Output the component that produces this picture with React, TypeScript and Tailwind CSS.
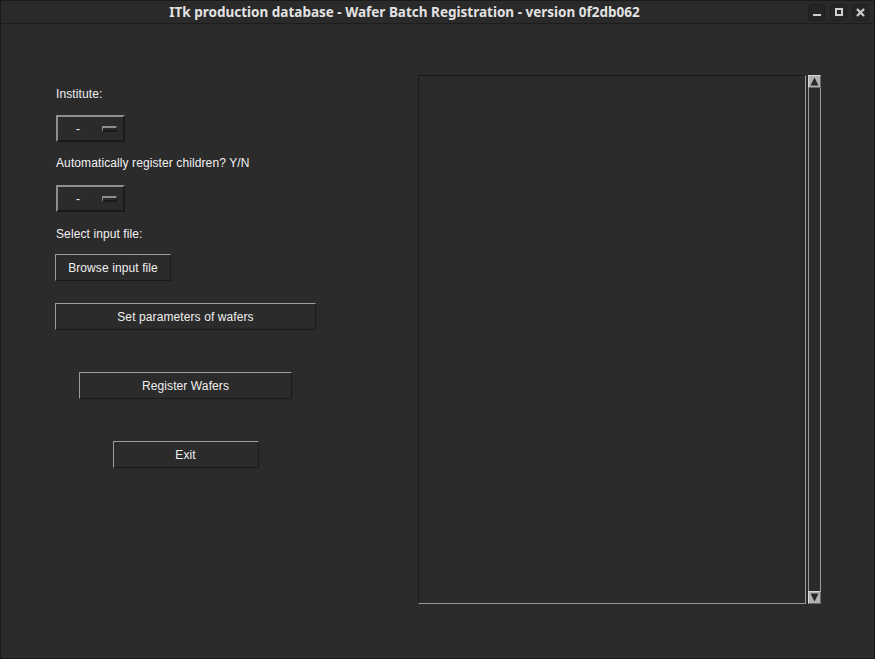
import React from "react";

const font = { fontFamily: '"Liberation Sans", Arial, sans-serif' };

const TkButton = ({ label, className }: { label: string; className: string }) => (
  <button
    className={`h-[27px] bg-[#2b2b2b] text-[12px] tracking-[0.1px] text-[#f0f0f0] border border-t-[#9c9c9c] border-l-[#9c9c9c] border-b-[#1a1a1a] border-r-[#1a1a1a] flex items-center justify-center ${className}`}
  >
    {label}
  </button>
);

const OptionMenu = () => (
  <div className="ml-px w-[69px] h-[27px] flex items-center border-2 border-t-[#8e8e8e] border-l-[#8e8e8e] border-b-[#1a1a1a] border-r-[#1a1a1a] bg-[#2b2b2b]">
    <span className="ml-[18px] w-[26px] text-[12px] text-[#f0f0f0] leading-none">-</span>
    <span className="w-[15px] h-[6px] border border-t-2 border-t-[#8e8e8e] border-l-[#8e8e8e] border-b-2 border-b-[#1a1a1a] border-r-[#1a1a1a]" />
  </div>
);

const TitleButton = ({ children }: { children: React.ReactNode }) => (
  <div className="w-[17px] h-[17px] rounded-[4px] bg-[#262626] border border-[#1e1e1e] flex items-center justify-center">
    {children}
  </div>
);

const Label = ({ text, mt }: { text: string; mt: string }) => (
  <div className={`${mt} ml-px h-[15px] leading-[15px] text-[12px] tracking-[0.1px] text-[#f2f2f2] whitespace-nowrap`}>
    {text}
  </div>
);

export default function App() {
  return (
    <div className="w-[875px] h-[659px] bg-[#1b1b1b] overflow-hidden" style={font}>
      <div className="w-full h-full rounded-t-[7px] bg-[#2b2b2b] border border-[#1a1a1a] flex flex-col">
        <div className="h-[23px] shrink-0 flex items-center border-b border-[#1d1d1d] bg-[#2a2a2a] relative">
          <div
            className="absolute left-0 right-[66px] top-0 h-[22px] flex items-center justify-center text-[13.5px] font-bold text-[#e2e2e2]"
            style={{ fontFamily: '"Noto Sans", "Open Sans", sans-serif' }}
          >
            ITk production database - Wafer Batch Registration - version 0f2db062
          </div>
          <div className="ml-auto mr-[5px] flex gap-[5px]">
            <TitleButton>
              <span className="mt-[5px] w-[8px] h-[2px] bg-[#d0d0d0]" />
            </TitleButton>
            <TitleButton>
              <span className="w-[8px] h-[8px] border-2 border-[#d0d0d0]" />
            </TitleButton>
            <TitleButton>
              <svg width="9" height="9" viewBox="0 0 9 9">
                <path d="M1 1 L8 8 M8 1 L1 8" stroke="#d0d0d0" strokeWidth="2.2" />
              </svg>
            </TitleButton>
          </div>
        </div>

        <div className="flex flex-1">
          <div className="ml-[54px] w-[261px] flex flex-col items-start">
            <Label text="Institute:" mt="mt-[63px]" />
            <div className="mt-[13px]">
              <OptionMenu />
            </div>
            <Label text="Automatically register children? Y/N" mt="mt-[14px]" />
            <div className="mt-[14px]">
              <OptionMenu />
            </div>
            <Label text="Select input file:" mt="mt-[15px]" />
            <TkButton label="Browse input file" className="mt-[12px] w-[116px]" />
            <TkButton label="Set parameters of wafers" className="mt-[22px] w-[261px]" />
            <TkButton label="Register Wafers" className="mt-[42px] w-[213px] self-center" />
            <TkButton label="Exit" className="mt-[42px] w-[146px] self-center" />
          </div>

          <div className="ml-[102px] mt-[51px] flex gap-[2px] h-[529px]">
            <div className="w-[388px] h-full border border-t-[#1a1a1a] border-l-[#1a1a1a] border-b-[#9a9a9a] border-r-[#9a9a9a] bg-[#2b2b2b]" />
            <div className="w-[13px] h-full flex flex-col">
              <div className="h-[13px] bg-[#b0b0b0] border border-t-[#d8d8d8] border-l-[#d8d8d8] border-b-[#6a6a6a] border-r-[#6a6a6a] flex items-center justify-center">
                <svg width="9" height="9" viewBox="0 0 9 9">
                  <path d="M4.5 0.5 L8.5 8.5 L0.5 8.5 Z" fill="#262626" />
                </svg>
              </div>
              <div className="flex-1 border-x border-[#9a9a9a] bg-[#2b2b2b]" />
              <div className="h-[13px] bg-[#b0b0b0] border border-t-[#d8d8d8] border-l-[#d8d8d8] border-b-[#6a6a6a] border-r-[#6a6a6a] flex items-center justify-center">
                <svg width="9" height="9" viewBox="0 0 9 9">
                  <path d="M0.5 0.5 L8.5 0.5 L4.5 8.5 Z" fill="#262626" />
                </svg>
              </div>
            </div>
          </div>
        </div>
      </div>
    </div>
  );
}
